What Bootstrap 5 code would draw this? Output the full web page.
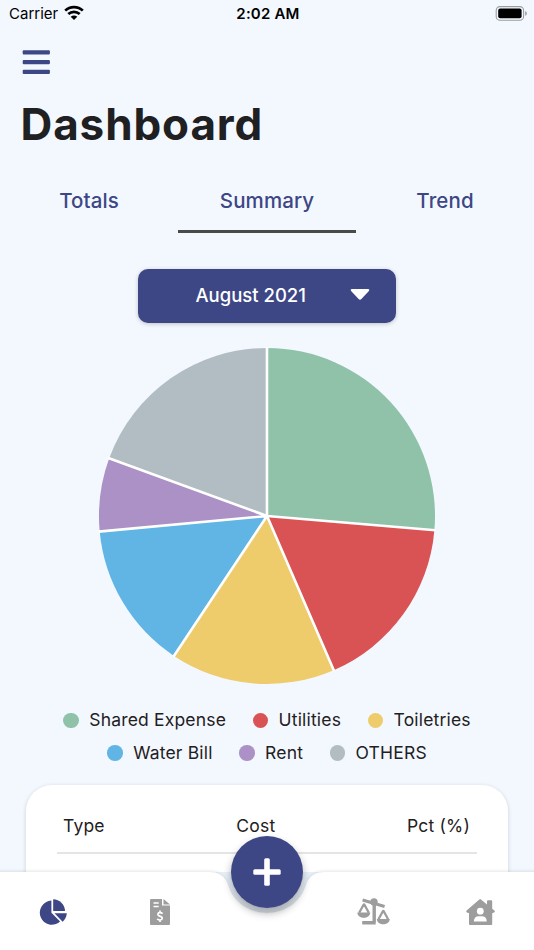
<!DOCTYPE html>
<html lang="en">
<head>
<meta charset="utf-8">
<meta name="viewport" content="width=device-width, initial-scale=1">
<title>Dashboard</title>
<link href="https://cdn.jsdelivr.net/npm/bootstrap@5.3.0/dist/css/bootstrap.min.css" rel="stylesheet">
<style>
  :root { --navy: #3d4785; --page: #f3f8ff; }
  body { font-family: Inter, "Liberation Sans", sans-serif; background: var(--page); color: #1f2022; }
  .screen { height: 950px; }
  .status { grid-template-columns: 1fr auto 1fr; height: 28px; padding: 0 7px 0 9px; font-size: 15px; line-height: 28px; color: #000; }
  .status .carrier { letter-spacing: 0; }
  .status .clock { letter-spacing: .2px; }
  .wifi { margin-left: 6px; margin-top: -2px; }
  .menu-btn { margin: 22px 0 0 22px; width: 28px; height: 24px; line-height: 0; }
  .page-title { margin: 22px 0 0 20.5px; font-size: 44px; line-height: 56px; letter-spacing: .9px; }
  .tabs { margin-top: 24px; }
  .tabs .nav-link { height: 57px; padding: 0; line-height: 50px; font-size: 20.5px; font-weight: 500; letter-spacing: .1px; color: var(--navy); border-bottom: 3px solid transparent; border-radius: 0; }
  .tabs .nav-link.active { border-color: #4a4a48; }
  .month-btn { margin-top: 35.500px; width: 258px; height: 54px; background: var(--navy); color: #fff; border-radius: 10px; font-size: 18.5px; font-weight: 500; padding: 0 26px 0 57.5px; box-shadow: 0 1px 4px rgba(0,0,0,.22); }
  .month-btn:hover { background: var(--navy); color: #fff; }
  .pie { margin-top: 23.500px; }
  .legend { margin-top: 18px; font-size: 17.5px; line-height: 32.5px; letter-spacing: .18px; }
  .legend-row { gap: 26.5px; }
  .dot { width: 15.5px; height: 15.5px; margin-right: 10.5px; }
  .c-green { background: #8fc2a9; } .c-red { background: #da5354; } .c-yellow { background: #eecb6b; }
  .c-blue { background: #60b5e4; } .c-purple { background: #ab91c6; } .c-grey { background: #b2bdc3; }
  .summary-card { margin: 15.500px 26px 0; height: 200px; padding: 25px 31px; border-radius: 26px; box-shadow: 0 1px 4px rgba(0,0,0,.16); }
  .head-row { height: 44px; padding: 0 7px 0 6px; border-bottom: 2px solid #e5e5e6; font-size: 17.5px; line-height: 32px; letter-spacing: .2px; }
  .tabbar { height: 78px; }
  .bar-shape { left: 0; top: -10px; }
  .tabbar-items { height: 79px; }
  .add-btn { left: 231px; top: -36px; width: 72px; height: 72px; background: var(--navy); box-shadow: 0 5px 9px rgba(0,0,0,.32); }
</style>
</head>
<body class="overflow-hidden">
<div class="screen d-flex flex-column position-relative overflow-hidden">
  <header class="status d-grid">
    <div class="d-flex align-items-center"><span class="carrier">Carrier</span>
      <svg class="wifi" width="20" height="16" viewBox="0 0 20 16" fill="none" stroke="#000" stroke-width="2.7"><path d="M1.200 5.600C6 .9 14 .9 18.800 5.600M4.300 9.100c3.200-3 8.200-3 11.400 0"/><path d="M6.700 11.800c1.900-1.700 4.700-1.700 6.600 0L10 15z" fill="#000" stroke="none"/></svg>
    </div>
    <span class="clock fw-semibold">2:02 AM</span>
    <div class="d-flex align-items-center justify-content-end">
      <svg width="32" height="16" viewBox="0 0 32 16"><rect x="1.200" y=".6" width="27.400" height="13.600" rx="3.800" fill="none" stroke="#9a9da2" stroke-width="1.100"/><rect x="3.200" y="2.600" width="23.400" height="9.600" rx="2"/><path d="M30.200 5.100q1.700.7 1.700 2.300t-1.700 2.300z" fill="#9a9da2"/></svg>
    </div>
  </header>
  <button class="menu-btn btn p-0 border-0" aria-label="Menu">
    <svg width="28" height="24" viewBox="0 0 28 24" fill="#3d4785"><rect x=".7" y=".3" width="27.200" height="4.200" rx="1"/><rect x=".7" y="10" width="27.200" height="4.200" rx="1"/><rect x=".7" y="19.700" width="27.200" height="4.200" rx="1"/></svg>
  </button>
  <h1 class="page-title fw-bold">Dashboard</h1>
  <nav class="tabs nav nav-fill row g-0 text-center">
    <a class="nav-link col-4" href="#">Totals</a>
    <a class="nav-link col-4 active" href="#">Summary</a>
    <a class="nav-link col-4" href="#">Trend</a>
  </nav>
  <button class="month-btn btn border-0 d-flex align-items-center justify-content-between mx-auto flex-shrink-0">
    <span>August 2021</span>
    <svg width="20" height="12" viewBox="0 0 20 12" fill="#fff" class="mb-1"><path d="M1.900 1.100h16.200c1.100 0 1.500 1 .8 1.800l-7.500 8.200c-.8.9-2 .9-2.800 0L1.100 2.900C.4 2.100.8 1.100 1.900 1.100z"/></svg>
  </button>
  <svg class="pie mx-auto flex-shrink-0" width="340" height="340" viewBox="-170 -170 340 340" stroke="#fff" stroke-width="2.600">
    <g stroke="none">
    <path fill="#8fc2a9" d="M0 0V-168A168 168 0 0 1 167.400 14.200z"/>
    <path fill="#da5354" d="M0 0L167.400 14.200A168 168 0 0 1 66.700 154.200z"/>
    <path fill="#eecb6b" d="M0 0L66.700 154.200A168 168 0 0 1 -93 139.900z"/>
    <path fill="#60b5e4" d="M0 0L-93 139.900A168 168 0 0 1 -167.300 15.500z"/>
    <path fill="#ab91c6" d="M0 0L-167.300 15.500A168 168 0 0 1 -157.800 -57.700z"/>
    <path fill="#b2bdc3" d="M0 0L-157.800 -57.700A168 168 0 0 1 0 -168z"/>
    </g>
    <path d="M0 0V-169M0 0L168.400 14.300M0 0L67.100 155.100M0 0L-93.600 140.700M0 0L-168.300 15.600M0 0L-158.700 -58"/>
  </svg>
  <div class="legend flex-shrink-0">
    <div class="legend-row d-flex justify-content-center">
      <span class="d-flex align-items-center"><i class="dot c-green rounded-circle"></i>Shared Expense</span>
      <span class="d-flex align-items-center"><i class="dot c-red rounded-circle"></i>Utilities</span>
      <span class="d-flex align-items-center"><i class="dot c-yellow rounded-circle"></i>Toiletries</span>
    </div>
    <div class="legend-row d-flex justify-content-center">
      <span class="d-flex align-items-center"><i class="dot c-blue rounded-circle"></i>Water Bill</span>
      <span class="d-flex align-items-center"><i class="dot c-purple rounded-circle"></i>Rent</span>
      <span class="d-flex align-items-center"><i class="dot c-grey rounded-circle"></i>OTHERS</span>
    </div>
  </div>
  <section class="summary-card bg-white flex-shrink-0">
    <div class="head-row d-flex justify-content-between"><span>Type</span><span>Cost</span><span>Pct (%)</span></div>
  </section>
  <footer class="tabbar fixed-bottom">
    <svg class="bar-shape position-absolute" width="534" height="88" viewBox="0 -10 534 88">
      <defs><filter id="soft" x="-5%" y="-20%" width="110%" height="140%"><feDropShadow dx="0" dy="-1" stdDeviation="1.500" flood-color="#000" flood-opacity=".1"/></filter></defs>
      <rect x="208" y="0" width="118" height="60" fill="#e9f1f9"/>
      <path filter="url(#soft)" fill="#fff" d="M-9 0H208C219 0 225 4 228 13C233 30 249 41 267 41S301 30 306 13C309 4 315 0 326 0H543V90H-9z"/>
    </svg>
    <div class="tabbar-items row g-0 align-items-center text-center position-relative">
      <a href="#" aria-label="Summary" class="col"><svg width="28" height="26" viewBox="0 0 28 26" fill="#3d4785"><path d="M12.400 1.600V13.700l8.700 8.900A12.100 12.100 0 1 1 12.400 1.600z"/><path d="M14.200.2A12.200 12.200 0 0 1 26 12H14.200z"/><path d="M15.500 14.300H27.800Q27.400 19.500 23.600 22.700z"/></svg></a>
      <a href="#" aria-label="Bills" class="col"><svg width="20" height="26" viewBox="0 0 20 26" fill="#9d9d9d"><path d="M1.200 0H12v6.500h8V25q0 1-1 1H1q-1 0-1-1V1.200Q0 0 1.200 0z"/><path d="M13.500 0L20 5.500h-6.500z"/><path d="M3.500 4h5.200M3.500 7.500h5.200" stroke="#fff" stroke-width="1.400"/><path d="M12.600 14.700Q11.500 13.500 9.800 13.600C7.600 13.700 7.200 16.200 9.100 16.900L11 17.600C13.100 18.400 12.500 21 10 21Q8.400 21 7.200 19.900M10 11.500v2M10 21v2" fill="none" stroke="#fff" stroke-width="1.700"/></svg></a>
      <span class="col"></span>
      <a href="#" aria-label="Balances" class="col"><svg width="33" height="27" viewBox="0 0 33 27" fill="none" stroke="#9d9d9d"><path d="M5.600 2L27.600 8.500" stroke-width="3"/><circle cx="17" cy="4" r="3.700" fill="#9d9d9d" stroke="none"/><path d="M17.200 4v20.500M5.200 24.800h13.500" stroke-width="3.400"/><path d="M2.200 14.700L6.400 7q.6-1 1.200 0l4.200 7.700M21.500 21.200l4.200-7.700q.6-1 1.200 0l4.200 7.700" stroke-width="2.300"/><path d="M.3 14.600H13.300c-.3 7-12.700 7-13 0zM19.800 20.900h13c-.3 7-12.700 7-13 0z" fill="#9d9d9d" stroke="none"/></svg></a>
      <a href="#" aria-label="Household" class="col"><svg width="29" height="26" viewBox="0 0 29 26" fill="#9d9d9d"><path d="M14.300 0L21 5.400V2.200q0-1 1-1h3.200q1 0 1 1v7.500l2.200 1.900q.9.800 0 1.600-.9.800-1.700.8h-.5v11q0 1-1 1H4q-1 0-1-1V14h-.7q-1 0-1.700-.9-.8-.8 0-1.600L13.300.5z"/><circle cx="14.300" cy="12.200" r="3.400" fill="#fff"/><path d="M7.800 22.500q.3-5.200 5-5.200h3q4.700 0 5 5.200z" fill="#fff"/></svg></a>
    </div>
    <button class="add-btn btn p-0 border-0 rounded-circle position-absolute d-flex align-items-center justify-content-center" aria-label="Add"><svg width="28" height="28" viewBox="0 0 28 28" fill="#fff"><rect x="11.200" y=".3" width="5.600" height="27.400" rx="1.500"/><rect x=".3" y="11.200" width="27.400" height="5.600" rx="1.500"/></svg></button>
  </footer>
</div>
<script src="https://cdn.jsdelivr.net/npm/bootstrap@5.3.0/dist/js/bootstrap.bundle.min.js"></script>
</body>
</html>
